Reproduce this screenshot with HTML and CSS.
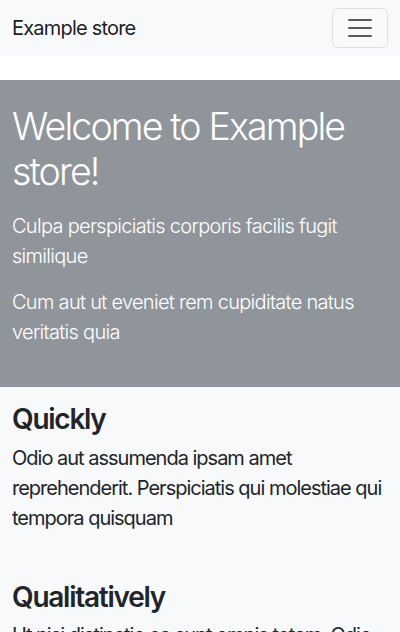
FILE: index.html
```html
<!DOCTYPE html>
<html lang="en">
<head>
<meta charset="utf-8">
<meta name="viewport" content="width=device-width, initial-scale=1">
<title>Example store</title>
<link rel="stylesheet" href="styles.css">
</head>
<body>
<nav class="navbar">
  <a class="brand" href="#">Example store</a>
  <button class="toggler" type="button" aria-label="Toggle navigation">
    <svg class="toggler-icon" viewBox="0 0 30 30" width="30" height="30" aria-hidden="true">
      <path d="M4 7h22M4 15h22M4 23h22" stroke="rgba(33,37,41,0.75)" stroke-width="2" stroke-linecap="round" stroke-miterlimit="10" fill="none"/>
    </svg>
  </button>
</nav>
<main>
  <section class="hero">
    <h1 class="hero-title">Welcome to Example store!</h1>
    <p class="lead">Culpa perspiciatis corporis facilis fugit similique</p>
    <p class="lead">Cum aut ut eveniet rem cupiditate natus veritatis quia</p>
  </section>
  <section class="features">
    <div class="feature">
      <h2 class="feature-title">Quickly</h2>
      <p class="feature-text">Odio aut assumenda ipsam amet reprehenderit. Perspiciatis qui molestiae qui tempora quisquam</p>
    </div>
    <div class="feature">
      <h2 class="feature-title">Qualitatively</h2>
      <p class="feature-text">Ut nisi distinctio ea sunt omnis totam. Odio maxime quia molestias voluptas</p>
    </div>
  </section>
</main>
</body>
</html>
```
FILE: styles.css
```css
* { box-sizing: border-box; }
html, body { margin: 0; padding: 0; }
body {
  font-family: Inter, "Noto Sans", "Liberation Sans", sans-serif;
  font-size: 16px;
  line-height: 1.5;
  color: #212529;
  background: #ffffff;
}
.navbar {
  display: flex;
  align-items: center;
  justify-content: space-between;
  height: 56px;
  padding: 8px 12px;
  background: #f8f9fa;
}
.brand {
  font-size: 20px;
  line-height: 30px;
  letter-spacing: -0.04em;
  color: rgba(0, 0, 0, 0.9);
  text-decoration: none;
}
.toggler {
  display: flex;
  align-items: center;
  justify-content: center;
  width: 56px;
  height: 40px;
  padding: 4px 12px;
  background: transparent;
  border: 1px solid rgba(0, 0, 0, 0.1);
  border-radius: 6px;
}
.toggler-icon { display: block; width: 30px; height: 30px; }
main { margin-top: 24px; }
.hero {
  background: #8f959b;
  color: #ffffff;
  padding: 24px 12px 24px;
}
.hero-title {
  margin: 0 0 17px;
  font-size: 37.6px;
  font-weight: 300;
  line-height: 1.2;
  letter-spacing: -0.05em;
}
.lead {
  margin: 0 0 16px;
  font-size: 20px;
  font-weight: 300;
  line-height: 30px;
  letter-spacing: -0.035em;
}
.features {
  background: #f8f9fa;
}
.feature {
  padding: 16px 12px;
}
.feature-title {
  margin: 0 0 6px;
  font-size: 28px;
  font-weight: 600;
  line-height: 1.2;
  letter-spacing: -0.045em;
  color: #212529;
}
.feature-text {
  margin: 0 0 16px;
  font-size: 20px;
  line-height: 30px;
  letter-spacing: -0.05em;
}
```
